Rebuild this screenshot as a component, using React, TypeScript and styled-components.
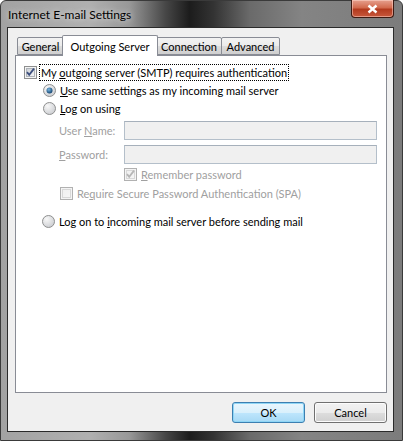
import styled, { createGlobalStyle } from "styled-components";

const GlobalStyle = createGlobalStyle`
  html, body {
    margin: 0;
    padding: 0;
    background: #ffffff;
    overflow: hidden;
  }
  * {
    box-sizing: border-box;
  }
`;

const font = `Lato, "Liberation Sans", sans-serif`;

const glass =
  "linear-gradient(90deg, #a2a2a2 0%, #b0b0b0 22%, #989898 32%, #474747 41%, #1c1c1c 47%, #333333 53%, #6a6a6a 62%, #848484 75%, #7c7c7c 100%)";

const Window = styled.div`
  width: 403px;
  height: 441px;
  display: flex;
  flex-direction: column;
  padding: 0 8px 8px 6px;
  border-radius: 6px 6px 0 0;
  background: ${glass};
  border: 1px solid #3a3a3a;
  font-family: ${font};
  font-size: 11px;
  color: #000;
`;

const TitleBar = styled.div`
  height: 26px;
  display: flex;
  align-items: flex-start;
  justify-content: space-between;
`;

const TitleText = styled.div`
  padding: 6px 0 0 1px;
  font-size: 12px;
  color: #000;
  text-shadow: 0 0 6px rgba(255, 255, 255, 0.8);
`;

const CloseButton = styled.div`
  width: 43px;
  height: 18px;
  margin-top: -1px;
  display: flex;
  align-items: center;
  justify-content: center;
  border: 1px solid #3d1a12;
  border-top: none;
  border-radius: 0 0 4px 4px;
  background: linear-gradient(180deg, #e6a08e 0%, #d26a4e 45%, #b33a1e 55%, #c8583c 100%);
  box-shadow: inset 0 0 0 1px rgba(255, 220, 210, 0.5);
`;

const Client = styled.div`
  flex: 1;
  display: flex;
  flex-direction: column;
  background: #f0f0f0;
  border: 1px solid #2a2a2a;
  padding: 7px 6px 8px 7px;
`;

const TabStrip = styled.div`
  display: flex;
  align-items: flex-end;
  height: 20px;
  padding-left: 3px;
  position: relative;
  z-index: 1;
`;

const Tab = styled.div<{ $active?: boolean; $w: number }>`
  width: ${(p) => p.$w}px;
  height: ${(p) => (p.$active ? "21px" : "18px")};
  margin-bottom: ${(p) => (p.$active ? "-1px" : "0")};
  margin-left: ${(p) => (p.$active ? "-2px" : "-1px")};
  margin-right: ${(p) => (p.$active ? "-1px" : "0")};
  display: flex;
  align-items: center;
  justify-content: center;
  border: 1px solid #898c95;
  border-bottom: ${(p) => (p.$active ? "none" : "1px solid #898c95")};
  border-radius: 2px 2px 0 0;
  background: ${(p) =>
    p.$active
      ? "#ffffff"
      : "linear-gradient(180deg, #f3f3f3 0%, #ebebeb 50%, #dddddd 51%, #cfcfcf 100%)"};
  color: #000;
  white-space: nowrap;
  position: relative;
  z-index: ${(p) => (p.$active ? 2 : 1)};
`;

const Panel = styled.div`
  flex: 1;
  background: #ffffff;
  border: 1px solid #898c95;
  padding: 8px 8px 0 8px;
  display: flex;
  flex-direction: column;
`;

const Row = styled.div<{ $indent: number; $mt?: number; $h?: number }>`
  display: flex;
  align-items: center;
  height: ${(p) => p.$h ?? 16}px;
  margin-top: ${(p) => p.$mt ?? 0}px;
  padding-left: ${(p) => p.$indent}px;
  white-space: nowrap;
`;

const Label = styled.span<{ $disabled?: boolean; $focus?: boolean }>`
  color: ${(p) => (p.$disabled ? "#a0a0a0" : "#000")};
  margin-left: 3px;
  padding: 0 1px;
  line-height: 15px;
  outline: ${(p) => (p.$focus ? "1px dotted #000" : "none")};
`;

const FieldLabel = styled.span`
  width: 65px;
  color: #a0a0a0;
`;

const TextBox = styled.div`
  width: 253px;
  height: 19px;
  border: 1px solid #b4bfca;
  border-top-color: #a6b0bb;
  background: #f0f0f0;
`;

const ButtonRow = styled.div`
  display: flex;
  justify-content: flex-end;
  gap: 9px;
  margin-top: 9px;
`;

const Button = styled.div<{ $default?: boolean }>`
  width: 73px;
  height: 21px;
  display: flex;
  align-items: center;
  justify-content: center;
  border-radius: 3px;
  border: 1px solid ${(p) => (p.$default ? "#3c7fb1" : "#707070")};
  background: ${(p) =>
    p.$default
      ? "linear-gradient(180deg, #eaf6fd 0%, #d9f0fc 50%, #bee6fd 51%, #a7d9f5 100%)"
      : "linear-gradient(180deg, #f2f2f2 0%, #ebebeb 50%, #dddddd 51%, #cfcfcf 100%)"};
  box-shadow: inset 0 0 0 1px ${(p) => (p.$default ? "#8fd6f6" : "#fcfcfc")};
  color: #000;
`;

const Under = styled.span`
  text-decoration: underline;
`;

function CheckBox({ checked, disabled }: { checked?: boolean; disabled?: boolean }) {
  const border = disabled ? "#b1b1b1" : "#8e8f8f";
  const mark = disabled ? "#b6b6b6" : "#3c4f7e";
  const id = disabled ? "cbd" : "cbe";
  return (
    <svg width="13" height="13" viewBox="0 0 13 13">
      <defs>
        <linearGradient id={id} x1="0" y1="0" x2="1" y2="1">
          <stop offset="0" stopColor={disabled ? "#f0f0f0" : "#cbcfd5"} />
          <stop offset="1" stopColor="#f6f6f6" />
        </linearGradient>
      </defs>
      <rect x="0.5" y="0.5" width="12" height="12" fill="#f4f4f4" stroke={border} />
      <rect x="2.5" y="2.5" width="8" height="8" fill={`url(#${id})`} stroke={disabled ? "#d8d8d8" : "#aeb3b9"} />
      {checked && <path d="M3 6.2 L5.2 8.8 L10 2.6" fill="none" stroke={mark} strokeWidth="1.8" />}
    </svg>
  );
}

function Radio({ checked }: { checked?: boolean }) {
  return (
    <svg width="13" height="13" viewBox="0 0 13 13">
      <defs>
        <radialGradient id="rb" cx="0.35" cy="0.3" r="0.8">
          <stop offset="0" stopColor="#f8f8f8" />
          <stop offset="1" stopColor="#c9cbcf" />
        </radialGradient>
        <radialGradient id="rd" cx="0.4" cy="0.35" r="0.7">
          <stop offset="0" stopColor="#7ab7e0" />
          <stop offset="1" stopColor="#0d3d6a" />
        </radialGradient>
      </defs>
      <circle cx="6.5" cy="6.5" r="6" fill="url(#rb)" stroke="#8e8f8f" />
      {checked && <circle cx="6.5" cy="6.5" r="3" fill="url(#rd)" />}
    </svg>
  );
}

export default function App() {
  return (
    <>
      <GlobalStyle />
      <Window>
        <TitleBar>
          <TitleText>Internet E-mail Settings</TitleText>
          <CloseButton>
            <svg width="11" height="10" viewBox="0 0 11 10">
              <path d="M1.5 1.5 L9.5 8.5 M9.5 1.5 L1.5 8.5" stroke="#fff" strokeWidth="2.4" />
            </svg>
          </CloseButton>
        </TitleBar>
        <Client>
          <TabStrip>
            <Tab $w={47}>General</Tab>
            <Tab $active $w={96}>
              Outgoing Server
            </Tab>
            <Tab $w={66}>Connection</Tab>
            <Tab $w={59}>Advanced</Tab>
          </TabStrip>
          <Panel>
            <Row $indent={0}>
              <CheckBox checked />
              <Label $focus>
                My <Under>o</Under>utgoing server (SMTP) requires authentication
              </Label>
            </Row>
            <Row $indent={19} $mt={2}>
              <Radio checked />
              <Label>
                <Under>U</Under>se same settings as my incoming mail server
              </Label>
            </Row>
            <Row $indent={19} $mt={2}>
              <Radio />
              <Label>
                <Under>L</Under>og on using
              </Label>
            </Row>
            <Row $indent={35} $mt={5} $h={19}>
              <FieldLabel>
                User <Under>N</Under>ame:
              </FieldLabel>
              <TextBox />
            </Row>
            <Row $indent={35} $mt={5} $h={19}>
              <FieldLabel>
                <Under>P</Under>assword:
              </FieldLabel>
              <TextBox />
            </Row>
            <Row $indent={100} $mt={2}>
              <CheckBox checked disabled />
              <Label $disabled>
                <Under>R</Under>emember password
              </Label>
            </Row>
            <Row $indent={36} $mt={3}>
              <CheckBox disabled />
              <Label $disabled>
                Re<Under>q</Under>uire Secure Password Authentication (SPA)
              </Label>
            </Row>
            <Row $indent={18} $mt={12}>
              <Radio />
              <Label>
                Log on to <Under>i</Under>ncoming mail server before sending mail
              </Label>
            </Row>
          </Panel>
          <ButtonRow>
            <Button $default>OK</Button>
            <Button>Cancel</Button>
          </ButtonRow>
        </Client>
      </Window>
    </>
  );
}
